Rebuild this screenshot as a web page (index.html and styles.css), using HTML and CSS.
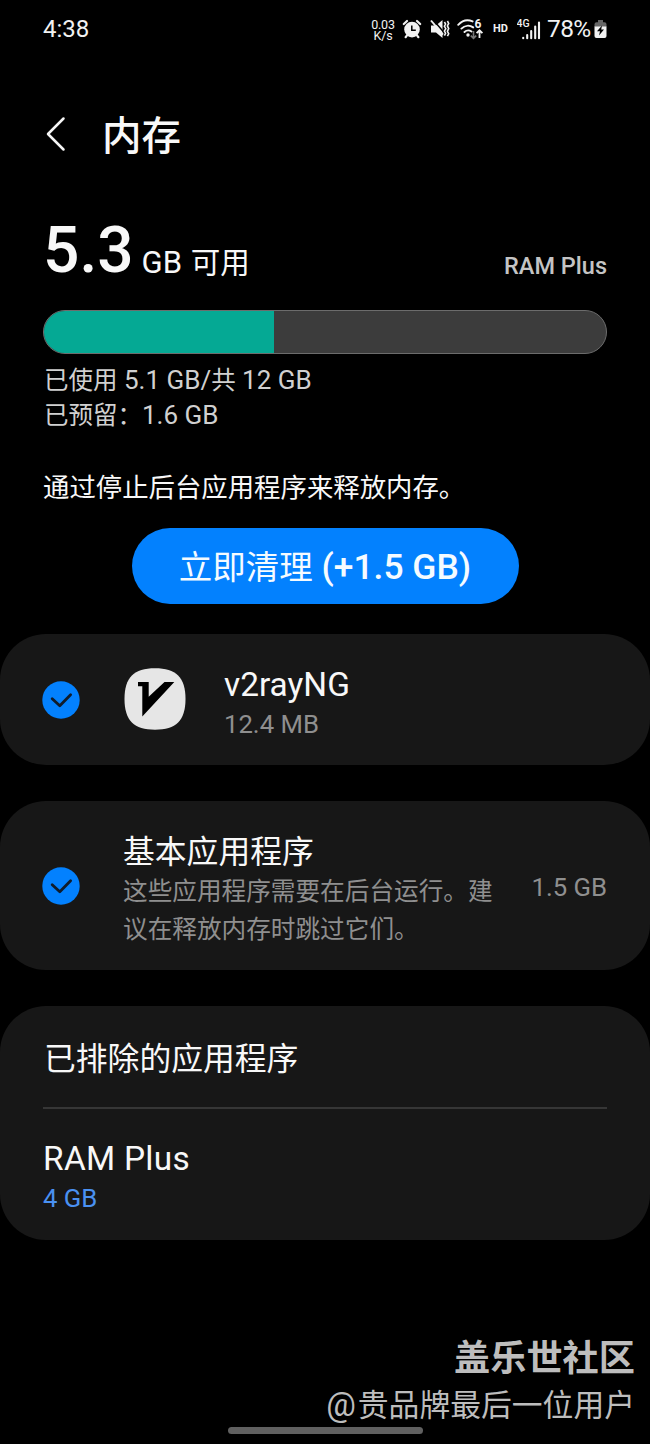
FILE: index.html
```html
<!DOCTYPE html>
<html lang="zh-CN">
<head>
<meta charset="utf-8">
<title>内存</title>
<link rel="stylesheet" href="styles.css">
</head>
<body>
<header class="status">
  <span class="clock">4:38</span>
  <div class="status-icons">
    <span class="speed">0.03<br>K/s</span>
    <svg class="alarm" width="20" height="20" viewBox="0 0 20 20">
      <circle cx="10" cy="10.6" r="7.8" fill="#f2f2f2"/>
      <path d="M1.8 5 5 2M18.2 5 15 2M5 16.4 3.6 18.2M15 16.4l1.4 1.800" stroke="#f2f2f2" stroke-width="2.2" stroke-linecap="round"/>
      <path d="M9.800 6.400v4.800h4" fill="none" stroke="#000" stroke-width="1.5"/>
    </svg>
    <svg class="mute" width="20" height="20" viewBox="0 0 20 20">
      <path d="M1 6.5h5L12.5 1v18L6 13.5H1z" fill="#f2f2f2"/>
      <path d="M2.500 0 14 13.600" stroke="#000" stroke-width="1.5"/>
      <path d="M1 1.500 13 15.700" stroke="#f2f2f2" stroke-width="1.900"/>
      <path d="M14.4 3l1.2 2-1.2 2.2 1.4 2.5-1.4 2.4 1.2 2.2-1.2 2.4M17.4 2l1.3 2.4-1.3 2.5 1.3 2.7-1.3 2.7 1.3 2.5-1.3 2.4" fill="none" stroke="#f2f2f2" stroke-width="1.6"/>
    </svg>
    <svg class="wifi" width="27" height="22" viewBox="0 0 27 22">
      <path d="M1.2 6.8C5.5 2.2 11 1.4 15.6 3.4M4.4 10.6c3.4-3.3 8.2-3.6 11.8-1.2M7.5 14c2-1.8 4.7-2 7-.5" fill="none" stroke="#f2f2f2" stroke-width="1.9" stroke-linecap="round"/>
      <circle cx="11" cy="17" r="1.7" fill="#f2f2f2"/>
      <path d="M16.5 13v7M13.8 17.6l2.7 2.7 2.7-2.7" fill="none" stroke="#777" stroke-width="1.6"/>
      <path d="M22.5 20v-7.4M19.6 15.2l2.9-2.9 2.9 2.9" fill="none" stroke="#f2f2f2" stroke-width="1.8"/>
      <text class="wifi-gen" x="17.5" y="10">6</text>
    </svg>
    <span class="hd">HD</span>
    <svg class="signal" width="24" height="22" viewBox="0 0 24 22">
      <text class="net" x="-.5" y="9">4G</text>
      <path d="M6.2 19.8v.4M10.2 17v3.2M14.2 13v7.2M18.2 8.5v11.7M22 4.5v15.7" stroke="#f2f2f2" stroke-width="2.1" stroke-linecap="round"/>
    </svg>
    <span class="percent">78%</span>
    <svg class="battery" width="13" height="20" viewBox="0 0 13 20">
      <path d="M4 1h5v2.2h1.5Q12.5 3.2 12.5 5.2V8H.5V5.2Q.5 3.2 2.5 3.2H4z" fill="#666"/>
      <path d="M.5 7.5h12V17q0 2-2 2h-8q-2 0-2-2z" fill="#f2f2f2"/>
      <path d="M8 6.5 3 12.3h3L5 16.4 10 10.6H7.2z" fill="#000"/>
    </svg>
  </div>
</header>

<div class="titlebar">
  <svg class="back" width="20" height="36" viewBox="0 0 20 36"><path d="M17.5 2.5 2 18l15.5 15.5" fill="none" stroke="#f5f5f5" stroke-width="2.5" stroke-linecap="round" stroke-linejoin="round"/></svg>
  <h1 class="title">内存</h1>
</div>

<section class="memory">
  <div class="available">
    <span class="amount">5.3</span>
    <span class="unit">GB <span class="free">可用</span></span>
    <span class="plus">RAM Plus</span>
  </div>
  <div class="bar"><div class="bar-fill"></div></div>
  <div class="stats">
    <div><span class="han">已使用</span> 5.1 GB/<span class="han">共</span> 12 GB</div>
    <div><span class="han">已预留：</span>1.6 GB</div>
  </div>
  <p class="hint">通过停止后台应用程序来释放内存。</p>
  <button class="clean">立即清理<span class="gain"> (+1.5 GB)</span></button>
</section>

<main class="cards">
  <section class="card app">
    <svg class="check" width="38" height="38" viewBox="0 0 38 38"><circle cx="19" cy="19" r="18.7" fill="#0381fe"/><path d="M10.2 17.8 17.8 24.8 28.6 13.8" fill="none" stroke="#101c2b" stroke-width="2.8" stroke-linecap="round" stroke-linejoin="round"/></svg>
    <svg class="logo" width="62" height="62" viewBox="0 0 62 62">
      <path d="M31 .3C52 .3 61.5 9.5 61.5 31S52 61.7 31 61.7.5 52.5.5 31 10 .3 31 .3z" fill="#e6e6e6"/>
      <path d="M14 14h10.700v14.700L40.500 14h9.800L18.300 48.500V18.300H14z" fill="#000"/>
    </svg>
    <div class="app-text">
      <div class="name latin">v2rayNG</div>
      <div class="size">12.4 MB</div>
    </div>
  </section>
  <section class="card basic">
    <svg class="check" width="38" height="38" viewBox="0 0 38 38"><circle cx="19" cy="19" r="18.7" fill="#0381fe"/><path d="M10.2 17.8 17.8 24.8 28.6 13.8" fill="none" stroke="#101c2b" stroke-width="2.8" stroke-linecap="round" stroke-linejoin="round"/></svg>
    <div class="basic-text">
      <div class="name">基本应用程序</div>
      <div class="desc">这些应用程序需要在后台运行。建<br>议在释放内存时跳过它们。</div>
    </div>
    <div class="size total">1.5 GB</div>
  </section>
  <section class="card more">
    <div class="name excluded">已排除的应用程序</div>
    <hr class="divider">
    <div class="name latin wide">RAM Plus</div>
    <div class="size link">4 GB</div>
  </section>
</main>

<footer class="credit">
  <div class="community">盖乐世社区</div>
  <div class="author"><span class="at">@</span>贵品牌最后一位用户</div>
  <div class="handle"></div>
</footer>
</body>
</html>
```
FILE: styles.css
```css
* { box-sizing: border-box; }

body {
  margin: 0;
  width: 650px;
  height: 1444px;
  overflow: hidden;
  display: flex;
  flex-direction: column;
  background: #000;
  color: #f8f8f8;
  font-family: Roboto, "Noto Sans CJK SC", sans-serif;
}

svg { display: block; flex: none; }

.status {
  display: flex;
  justify-content: space-between;
  align-items: center;
  height: 28px;
  margin: 15px 43px 0;
  font-size: 24px;
  line-height: 28px;
  color: #f2f2f2;
}
.status-icons { display: flex; align-items: center; }
.speed {
  width: 26px;
  margin-top: 2px;
  font-size: 12.5px;
  line-height: 11.5px;
  letter-spacing: -0.2px;
  text-align: center;
}
.alarm { margin-left: 6px; }
.mute { margin-left: 8px; }
.wifi { margin-left: 7px; }
.wifi-gen { font: 700 12px Roboto, sans-serif; fill: #f2f2f2; }
.hd { margin-left: 9px; width: 17px; font-size: 11px; font-weight: 700; }
.signal { margin-left: 7px; }
.net { font: 500 10.5px Roboto, sans-serif; fill: #f2f2f2; }
.percent { margin-left: 6px; width: 43px; font-size: 24.5px; letter-spacing: -0.6px; }
.battery { margin-left: 4px; }

.titlebar {
  display: flex;
  align-items: center;
  gap: 36px;
  height: 48px;
  margin: 70px 0 0 46px;
}
.back { margin-bottom: 6px; }
.title { margin: 0; font-size: 39.5px; line-height: 48px; font-weight: 500; }

.memory { display: flex; flex-direction: column; padding: 58px 43px 0; }
.available { display: flex; align-items: flex-start; height: 64px; }
.amount { font-size: 64px; line-height: 64px; font-weight: 500; }
.unit { margin: 24px 0 0 8px; font-size: 31px; line-height: 40px; }
.free { margin-left: 1px; font-size: 29.5px; }
.plus {
  margin: 27px 0 0 auto;
  font-size: 23.5px;
  line-height: 40px;
  font-weight: 500;
  color: #c4c4c4;
}
.bar {
  height: 44px;
  margin-top: 27px;
  overflow: hidden;
  border: 1px solid #6c6c6c;
  border-radius: 22px;
  background: #3c3c3c;
}
.bar-fill { width: 230px; height: 100%; background: #05a994; }
.stats { margin-top: 9px; padding-left: 1px; font-size: 26px; line-height: 35px; color: #d0d0d0; }
.han { font-size: 24.5px; }
.hint { margin: 35px 0 0; font-size: 26.4px; line-height: 40px; }
.clean {
  align-self: center;
  width: 387px;
  height: 76px;
  margin-top: 20px;
  padding: 2px 0 0;
  border: 0;
  border-radius: 38px;
  background: #0381fe;
  color: #f5fbff;
  font: 33.5px/40px Roboto, "Noto Sans CJK SC", sans-serif;
}
.gain { font-size: 35.4px; font-weight: 500; }

.cards { display: flex; flex-direction: column; gap: 36px; margin-top: 30px; }
.card { border-radius: 46px; background: #171717; }
.name { font-size: 31.8px; line-height: 40px; }
.latin { font-size: 33.4px; }
.wide { letter-spacing: 0.3px; }
.size { font-size: 25.7px; line-height: 36px; color: #8f8f8f; }
.app { display: flex; align-items: center; height: 131px; padding-left: 42px; }
.logo { margin: -1px 0 0 44px; }
.app-text { display: flex; flex-direction: column; gap: 1px; margin: 8px 0 0 38px; }
.basic { display: flex; align-items: center; height: 169px; padding: 0 43px 0 42px; }
.basic-text { margin: 9px auto 0 43px; }
.total { padding-top: 3px; }
.desc { margin-top: 1px; font-size: 24.65px; line-height: 37.5px; color: #8f8f8f; }
.more { height: 234px; padding: 33px 43px 0; }
.excluded { padding-left: 1px; }
.divider { height: 2px; margin: 28px 0 30px; border: 0; background: #363636; }
.link { margin-top: 1px; color: #4a91f2; }

.credit {
  display: flex;
  flex-direction: column;
  align-items: flex-end;
  margin-top: auto;
  padding: 0 15px 10px 0;
  color: #bdbdbd;
}
.community { font-size: 36.2px; line-height: 48px; font-weight: 700; }
.author { margin-top: 3px; font-size: 30.8px; line-height: 40px; }
.at { margin-right: 2px; font-size: 33px; line-height: 1; }
.handle {
  align-self: flex-start;
  width: 195px;
  height: 7px;
  margin: 1px 0 0 228px;
  border-radius: 4px;
  background: #606060;
}
```
